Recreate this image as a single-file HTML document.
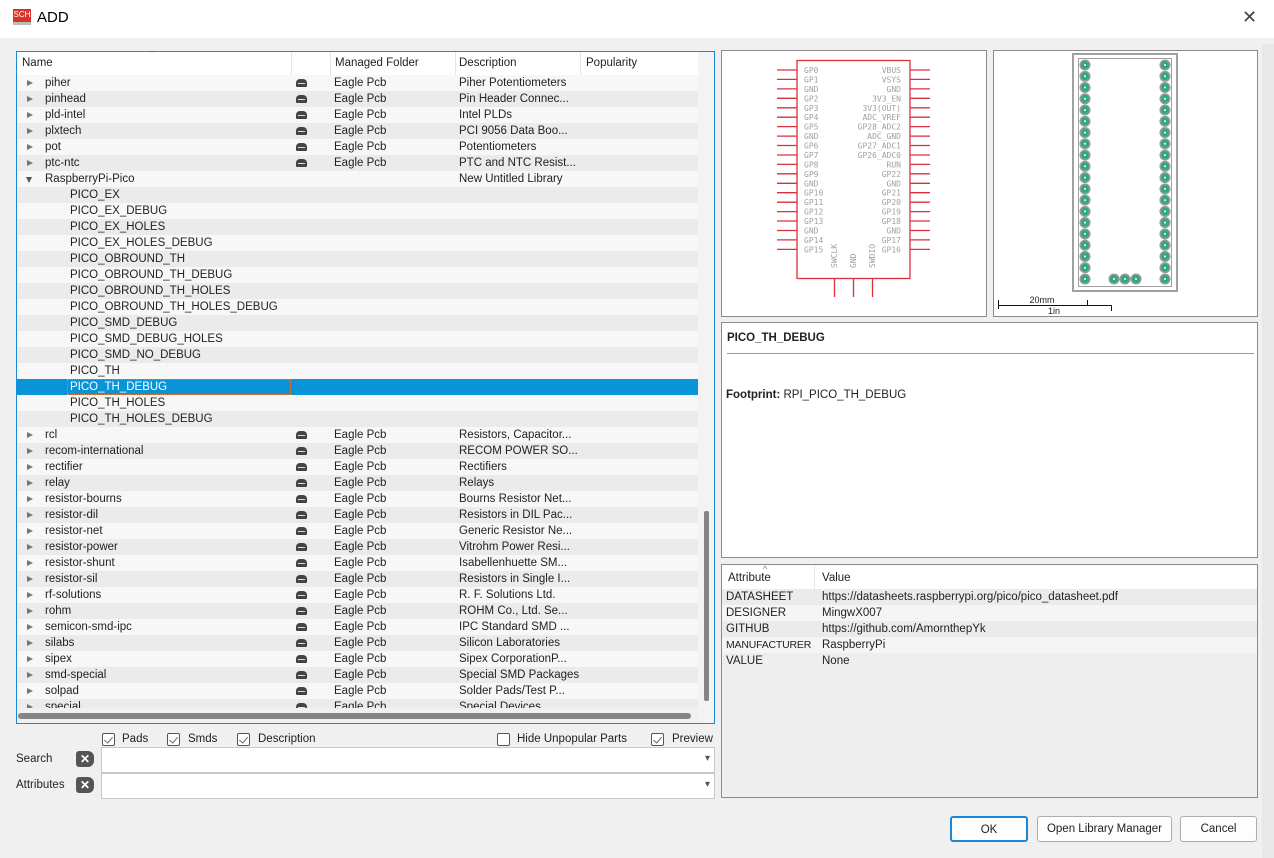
<!DOCTYPE html>
<html><head><meta charset="utf-8"><style>
*{box-sizing:border-box;margin:0;padding:0}
body{width:1274px;height:858px;background:#f0f0f0;font-family:"Liberation Sans",sans-serif;font-size:11.5px;color:#222;position:relative;overflow:hidden}
.a{position:absolute}
.title{left:0;top:0;width:1274px;height:38px;background:#fff}
.tree{left:16px;top:51px;width:699px;height:673px;border:1px solid #1b8ad6;background:#fff;overflow:hidden}
.hdr{position:absolute;left:0;top:0;height:23px;width:681px;background:#fff}
.hdr div{position:absolute;top:5px}
.sep{position:absolute;top:0;width:1px;height:23px;background:#e5e5e5}
.row{position:absolute;left:0;width:681px;height:16px;line-height:16px;white-space:nowrap}
.row span{position:absolute}
.e{background:#f7f7f7}.o{background:#ebebeb}
.sel{background:#0a94d8;color:#fff}
.tri{left:10px;top:5px;width:0;height:0;border-top:3.5px solid transparent;border-bottom:3.5px solid transparent;border-left:6px solid #777}
.trd{left:9px;top:6px;width:0;height:0;border-left:3.5px solid transparent;border-right:3.5px solid transparent;border-top:6px solid #555}
.ic{left:279px;top:4px;width:11px;height:8px;background:#444;border-radius:4px 4px 1px 1px}
.ic:after{content:"";position:absolute;left:2px;top:4px;width:7px;height:1px;background:#ddd}
.box{border:1px solid #8a8a8a;background:#fff}
.cb{position:absolute;width:13px;height:13px;border:1px solid #555;border-radius:2px;background:#fff}
.cb.k:after{content:"";position:absolute;left:3px;top:1px;width:4px;height:7px;border-right:1.5px solid #666;border-bottom:1.5px solid #666;transform:rotate(40deg)}
.lbl{position:absolute}
.inp{position:absolute;left:101px;width:614px;height:26px;background:#fff;border:1px solid #c8c8c8}
.inp:after{content:"▾";position:absolute;right:4px;top:5px;font-size:10px;color:#555}
.xb{position:absolute;left:76px;width:18px;height:16px;background:#555;color:#fff;font-weight:bold;font-size:12px;line-height:16px;text-align:center;border-radius:3px 6px 6px 3px}
.btn{position:absolute;top:816px;height:26px;background:#fdfdfd;border:1px solid #adadad;border-radius:3px;text-align:center;line-height:24px}
.ar div{position:absolute;left:0;width:535px;height:16px;line-height:16px}
</style></head><body>
<div class="a title"></div>
<div class="a" style="left:13px;top:9px;width:18px;height:16px;background:#d8322c;color:#fff;font-size:8px;line-height:12px;text-align:center;border-bottom:3px solid #bbb">SCH</div>
<div class="a" style="left:37px;top:9px;font-size:15px;color:#000">ADD</div>
<div class="a" style="left:1242px;top:7px;font-size:18px;color:#444">✕</div>

<div class="a tree">
 <div class="hdr">
  <div style="left:5px">Name</div><div style="left:133px;top:-4px;font-size:10px;color:#777">^</div>
  <span class="sep" style="left:274px"></span><span class="sep" style="left:313px"></span>
  <div style="left:318px">Managed Folder</div><span class="sep" style="left:438px"></span>
  <div style="left:442px">Description</div><span class="sep" style="left:563px"></span>
  <div style="left:569px">Popularity</div>
 </div>
 <div class="row e" style="top:23px"><span class="tri"></span><span style="left:28px">piher</span><span class="ic"></span><span style="left:317px">Eagle Pcb</span><span style="left:442px">Piher Potentiometers</span></div>
 <div class="row o" style="top:39px"><span class="tri"></span><span style="left:28px">pinhead</span><span class="ic"></span><span style="left:317px">Eagle Pcb</span><span style="left:442px">Pin Header Connec...</span></div>
 <div class="row e" style="top:55px"><span class="tri"></span><span style="left:28px">pld-intel</span><span class="ic"></span><span style="left:317px">Eagle Pcb</span><span style="left:442px">Intel PLDs</span></div>
 <div class="row o" style="top:71px"><span class="tri"></span><span style="left:28px">plxtech</span><span class="ic"></span><span style="left:317px">Eagle Pcb</span><span style="left:442px">PCI 9056 Data Boo...</span></div>
 <div class="row e" style="top:87px"><span class="tri"></span><span style="left:28px">pot</span><span class="ic"></span><span style="left:317px">Eagle Pcb</span><span style="left:442px">Potentiometers</span></div>
 <div class="row o" style="top:103px"><span class="tri"></span><span style="left:28px">ptc-ntc</span><span class="ic"></span><span style="left:317px">Eagle Pcb</span><span style="left:442px">PTC and NTC Resist...</span></div>
 <div class="row e" style="top:119px"><span class="trd"></span><span style="left:28px">RaspberryPi-Pico</span><span style="left:442px">New Untitled Library</span></div>
 <div class="row o" style="top:135px"><span style="left:53px">PICO_EX</span></div>
 <div class="row e" style="top:151px"><span style="left:53px">PICO_EX_DEBUG</span></div>
 <div class="row o" style="top:167px"><span style="left:53px">PICO_EX_HOLES</span></div>
 <div class="row e" style="top:183px"><span style="left:53px">PICO_EX_HOLES_DEBUG</span></div>
 <div class="row o" style="top:199px"><span style="left:53px">PICO_OBROUND_TH</span></div>
 <div class="row e" style="top:215px"><span style="left:53px">PICO_OBROUND_TH_DEBUG</span></div>
 <div class="row o" style="top:231px"><span style="left:53px">PICO_OBROUND_TH_HOLES</span></div>
 <div class="row e" style="top:247px"><span style="left:53px">PICO_OBROUND_TH_HOLES_DEBUG</span></div>
 <div class="row o" style="top:263px"><span style="left:53px">PICO_SMD_DEBUG</span></div>
 <div class="row e" style="top:279px"><span style="left:53px">PICO_SMD_DEBUG_HOLES</span></div>
 <div class="row o" style="top:295px"><span style="left:53px">PICO_SMD_NO_DEBUG</span></div>
 <div class="row e" style="top:311px"><span style="left:53px">PICO_TH</span></div>
 <div class="row sel" style="top:327px"><span style="left:50px;top:0;width:224px;height:16px;border:1px dotted #e08040;padding-left:2px;line-height:14px">PICO_TH_DEBUG</span></div>
 <div class="row e" style="top:343px"><span style="left:53px">PICO_TH_HOLES</span></div>
 <div class="row o" style="top:359px"><span style="left:53px">PICO_TH_HOLES_DEBUG</span></div>
 <div class="row e" style="top:375px"><span class="tri"></span><span style="left:28px">rcl</span><span class="ic"></span><span style="left:317px">Eagle Pcb</span><span style="left:442px">Resistors, Capacitor...</span></div>
 <div class="row o" style="top:391px"><span class="tri"></span><span style="left:28px">recom-international</span><span class="ic"></span><span style="left:317px">Eagle Pcb</span><span style="left:442px">RECOM POWER SO...</span></div>
 <div class="row e" style="top:407px"><span class="tri"></span><span style="left:28px">rectifier</span><span class="ic"></span><span style="left:317px">Eagle Pcb</span><span style="left:442px">Rectifiers</span></div>
 <div class="row o" style="top:423px"><span class="tri"></span><span style="left:28px">relay</span><span class="ic"></span><span style="left:317px">Eagle Pcb</span><span style="left:442px">Relays</span></div>
 <div class="row e" style="top:439px"><span class="tri"></span><span style="left:28px">resistor-bourns</span><span class="ic"></span><span style="left:317px">Eagle Pcb</span><span style="left:442px">Bourns Resistor Net...</span></div>
 <div class="row o" style="top:455px"><span class="tri"></span><span style="left:28px">resistor-dil</span><span class="ic"></span><span style="left:317px">Eagle Pcb</span><span style="left:442px">Resistors in DIL Pac...</span></div>
 <div class="row e" style="top:471px"><span class="tri"></span><span style="left:28px">resistor-net</span><span class="ic"></span><span style="left:317px">Eagle Pcb</span><span style="left:442px">Generic Resistor Ne...</span></div>
 <div class="row o" style="top:487px"><span class="tri"></span><span style="left:28px">resistor-power</span><span class="ic"></span><span style="left:317px">Eagle Pcb</span><span style="left:442px">Vitrohm Power Resi...</span></div>
 <div class="row e" style="top:503px"><span class="tri"></span><span style="left:28px">resistor-shunt</span><span class="ic"></span><span style="left:317px">Eagle Pcb</span><span style="left:442px">Isabellenhuette SM...</span></div>
 <div class="row o" style="top:519px"><span class="tri"></span><span style="left:28px">resistor-sil</span><span class="ic"></span><span style="left:317px">Eagle Pcb</span><span style="left:442px">Resistors in Single I...</span></div>
 <div class="row e" style="top:535px"><span class="tri"></span><span style="left:28px">rf-solutions</span><span class="ic"></span><span style="left:317px">Eagle Pcb</span><span style="left:442px">R. F. Solutions Ltd.</span></div>
 <div class="row o" style="top:551px"><span class="tri"></span><span style="left:28px">rohm</span><span class="ic"></span><span style="left:317px">Eagle Pcb</span><span style="left:442px">ROHM Co., Ltd. Se...</span></div>
 <div class="row e" style="top:567px"><span class="tri"></span><span style="left:28px">semicon-smd-ipc</span><span class="ic"></span><span style="left:317px">Eagle Pcb</span><span style="left:442px">IPC Standard SMD ...</span></div>
 <div class="row o" style="top:583px"><span class="tri"></span><span style="left:28px">silabs</span><span class="ic"></span><span style="left:317px">Eagle Pcb</span><span style="left:442px">Silicon Laboratories</span></div>
 <div class="row e" style="top:599px"><span class="tri"></span><span style="left:28px">sipex</span><span class="ic"></span><span style="left:317px">Eagle Pcb</span><span style="left:442px">Sipex CorporationP...</span></div>
 <div class="row o" style="top:615px"><span class="tri"></span><span style="left:28px">smd-special</span><span class="ic"></span><span style="left:317px">Eagle Pcb</span><span style="left:442px">Special SMD Packages</span></div>
 <div class="row e" style="top:631px"><span class="tri"></span><span style="left:28px">solpad</span><span class="ic"></span><span style="left:317px">Eagle Pcb</span><span style="left:442px">Solder Pads/Test P...</span></div>
 <div class="row o" style="top:647px;height:9px;overflow:hidden"><span class="tri"></span><span style="left:28px">special</span><span class="ic"></span><span style="left:317px">Eagle Pcb</span><span style="left:442px">Special Devices</span></div>
 <div class="a" style="left:0;top:656px;width:681px;height:16px;background:#f0f0f0"></div>
 <div class="a" style="left:1px;top:661px;width:673px;height:6px;background:#858585;border-radius:3px"></div>
 <div class="a" style="left:681px;top:0;width:17px;height:672px;background:#f3f3f3"></div>
 <div class="a" style="left:687px;top:459px;width:5px;height:190px;background:#858585;border-radius:2px"></div>
</div>

<span class="cb k" style="left:102px;top:733px"></span><span class="lbl" style="left:122px;top:733px">Pads</span>
<span class="cb k" style="left:167px;top:733px"></span><span class="lbl" style="left:188px;top:733px">Smds</span>
<span class="cb k" style="left:237px;top:733px"></span><span class="lbl" style="left:258px;top:733px">Description</span>
<span class="cb" style="left:497px;top:733px"></span><span class="lbl" style="left:517px;top:733px">Hide Unpopular Parts</span>
<span class="cb k" style="left:651px;top:733px"></span><span class="lbl" style="left:672px;top:733px">Preview</span>
<span class="lbl" style="left:16px;top:753px">Search</span><span class="xb" style="top:751px">✕</span><div class="inp" style="top:747px"></div>
<span class="lbl" style="left:16px;top:779px">Attributes</span><span class="xb" style="top:777px">✕</span><div class="inp" style="top:773px"></div>

<div class="a box" style="left:721px;top:50px;width:266px;height:267px"></div>
<svg class="a" style="left:0;top:0" width="1274" height="858">
 <g stroke="#d9303a" stroke-width="1.3" fill="none">
  <rect x="797" y="60.5" width="113" height="218"/>
  <path d="M777 70H797M777 79.4H797M777 88.9H797M777 98.3H797M777 107.8H797M777 117.2H797M777 126.6H797M777 136.1H797M777 145.5H797M777 155H797M777 164.4H797M777 173.8H797M777 183.3H797M777 192.7H797M777 202.2H797M777 211.6H797M777 221H797M777 230.5H797M777 239.9H797M777 249.4H797"/>
  <path d="M910 70H930M910 79.4H930M910 88.9H930M910 98.3H930M910 107.8H930M910 117.2H930M910 126.6H930M910 136.1H930M910 145.5H930M910 155H930M910 164.4H930M910 173.8H930M910 183.3H930M910 192.7H930M910 202.2H930M910 211.6H930M910 221H930M910 230.5H930M910 239.9H930M910 249.4H930"/>
  <path d="M834.5 279V297M853.5 279V297M872.5 279V297"/>
 </g>
 <g font-family="DejaVu Sans Mono,Liberation Mono,monospace" font-size="8" fill="#a0a0a0">
  <text x="804" y="73">GP0</text><text x="804" y="82.4">GP1</text><text x="804" y="91.9">GND</text><text x="804" y="101.3">GP2</text><text x="804" y="110.8">GP3</text><text x="804" y="120.2">GP4</text><text x="804" y="129.6">GP5</text><text x="804" y="139.1">GND</text><text x="804" y="148.5">GP6</text><text x="804" y="158">GP7</text><text x="804" y="167.4">GP8</text><text x="804" y="176.8">GP9</text><text x="804" y="186.3">GND</text><text x="804" y="195.7">GP10</text><text x="804" y="205.2">GP11</text><text x="804" y="214.6">GP12</text><text x="804" y="224">GP13</text><text x="804" y="233.5">GND</text><text x="804" y="242.9">GP14</text><text x="804" y="252.4">GP15</text>
  <g text-anchor="end"><text x="901" y="73">VBUS</text><text x="901" y="82.4">VSYS</text><text x="901" y="91.9">GND</text><text x="901" y="101.3">3V3_EN</text><text x="901" y="110.8">3V3(OUT)</text><text x="901" y="120.2">ADC_VREF</text><text x="901" y="129.6">GP28_ADC2</text><text x="901" y="139.1">ADC_GND</text><text x="901" y="148.5">GP27_ADC1</text><text x="901" y="158">GP26_ADC0</text><text x="901" y="167.4">RUN</text><text x="901" y="176.8">GP22</text><text x="901" y="186.3">GND</text><text x="901" y="195.7">GP21</text><text x="901" y="205.2">GP20</text><text x="901" y="214.6">GP19</text><text x="901" y="224">GP18</text><text x="901" y="233.5">GND</text><text x="901" y="242.9">GP17</text><text x="901" y="252.4">GP16</text>
   <text transform="translate(837,268) rotate(-90)" text-anchor="start">SWCLK</text>
   <text transform="translate(856,268) rotate(-90)" text-anchor="start">GND</text>
   <text transform="translate(875,268) rotate(-90)" text-anchor="start">SWDIO</text>
  </g>
 </g>
 <rect x="993.5" y="50.5" width="264" height="266" fill="#fff" stroke="#8a8a8a"/>
 <rect x="1073" y="54" width="104" height="237" fill="none" stroke="#a0a0a0" stroke-width="2"/>
 <rect x="1078.5" y="58.5" width="93" height="228" fill="none" stroke="#a0a0a0"/>
 <defs><g id="pd"><circle r="4.8" fill="#2faa80" stroke="#9a9a9a" stroke-width="1.5"/><circle r="1" fill="#fff"/></g></defs>
 <g>
  <use href="#pd" x="1085" y="65"/><use href="#pd" x="1085" y="76.3"/><use href="#pd" x="1085" y="87.5"/><use href="#pd" x="1085" y="98.8"/><use href="#pd" x="1085" y="110"/><use href="#pd" x="1085" y="121.3"/><use href="#pd" x="1085" y="132.6"/><use href="#pd" x="1085" y="143.8"/><use href="#pd" x="1085" y="155.1"/><use href="#pd" x="1085" y="166.3"/><use href="#pd" x="1085" y="177.6"/><use href="#pd" x="1085" y="188.9"/><use href="#pd" x="1085" y="200.1"/><use href="#pd" x="1085" y="211.4"/><use href="#pd" x="1085" y="222.6"/><use href="#pd" x="1085" y="233.9"/><use href="#pd" x="1085" y="245.2"/><use href="#pd" x="1085" y="256.4"/><use href="#pd" x="1085" y="267.7"/><use href="#pd" x="1085" y="279"/>
  <use href="#pd" x="1165" y="65"/><use href="#pd" x="1165" y="76.3"/><use href="#pd" x="1165" y="87.5"/><use href="#pd" x="1165" y="98.8"/><use href="#pd" x="1165" y="110"/><use href="#pd" x="1165" y="121.3"/><use href="#pd" x="1165" y="132.6"/><use href="#pd" x="1165" y="143.8"/><use href="#pd" x="1165" y="155.1"/><use href="#pd" x="1165" y="166.3"/><use href="#pd" x="1165" y="177.6"/><use href="#pd" x="1165" y="188.9"/><use href="#pd" x="1165" y="200.1"/><use href="#pd" x="1165" y="211.4"/><use href="#pd" x="1165" y="222.6"/><use href="#pd" x="1165" y="233.9"/><use href="#pd" x="1165" y="245.2"/><use href="#pd" x="1165" y="256.4"/><use href="#pd" x="1165" y="267.7"/><use href="#pd" x="1165" y="279"/>
  <use href="#pd" x="1114" y="279"/><use href="#pd" x="1125" y="279"/><use href="#pd" x="1136" y="279"/>
 </g>
 <path d="M998.5 300V309M998.5 305.5H1111.5M1087.5 300V305.5M1111.5 305.5V311" stroke="#111" fill="none"/>
 <text x="1042" y="303" font-size="9" font-family="Liberation Sans" fill="#222" text-anchor="middle">20mm</text>
 <text x="1054" y="314" font-size="9" font-family="Liberation Sans" fill="#222" text-anchor="middle">1in</text>
</svg>
<div class="a" style="left:1262px;top:44px;width:12px;height:814px;background:#e8e8e8"></div>

<div class="a box" style="left:721px;top:322px;width:537px;height:236px">
 <div class="a" style="left:5px;top:9px;font-weight:bold">PICO_TH_DEBUG</div>
 <div class="a" style="left:5px;top:30px;width:527px;height:1px;background:#999"></div>
 <div class="a" style="left:4px;top:66px"><b>Footprint:</b> RPI_PICO_TH_DEBUG</div>
</div>

<div class="a ar" style="left:721px;top:564px;width:537px;height:234px;border:1px solid #8a8a8a;background:#eeeeee;overflow:hidden">
 <div style="top:0;height:24px;background:#fff;width:535px"></div>
 <div style="top:0;left:92px;width:1px;height:24px;background:#e5e5e5"></div>
 <div style="top:5px;left:6px;width:80px">Attribute</div><div style="top:-4px;left:41px;width:20px;font-size:9px;color:#777">^</div>
 <div style="top:5px;left:100px;width:80px">Value</div>
 <div style="top:24px;background:#ebebeb;width:535px"><span style="position:absolute;left:4px">DATASHEET</span><span style="position:absolute;left:100px">https://datasheets.raspberrypi.org/pico/pico_datasheet.pdf</span></div>
 <div style="top:40px;background:#f5f5f5;width:535px"><span style="position:absolute;left:4px">DESIGNER</span><span style="position:absolute;left:100px">MingwX007</span></div>
 <div style="top:56px;background:#ebebeb;width:535px"><span style="position:absolute;left:4px">GITHUB</span><span style="position:absolute;left:100px">https://github.com/AmornthepYk</span></div>
 <div style="top:72px;background:#f5f5f5;width:535px"><span style="position:absolute;left:4px;font-size:10.5px;letter-spacing:-0.2px">MANUFACTURER</span><span style="position:absolute;left:100px">RaspberryPi</span></div>
 <div style="top:88px;width:535px"><span style="position:absolute;left:4px">VALUE</span><span style="position:absolute;left:100px">None</span></div>
</div>

<div class="btn" style="left:950px;width:78px;border:2px solid #1a86d8">OK</div>
<div class="btn" style="left:1037px;width:135px">Open Library Manager</div>
<div class="btn" style="left:1180px;width:77px">Cancel</div>
</body></html>
